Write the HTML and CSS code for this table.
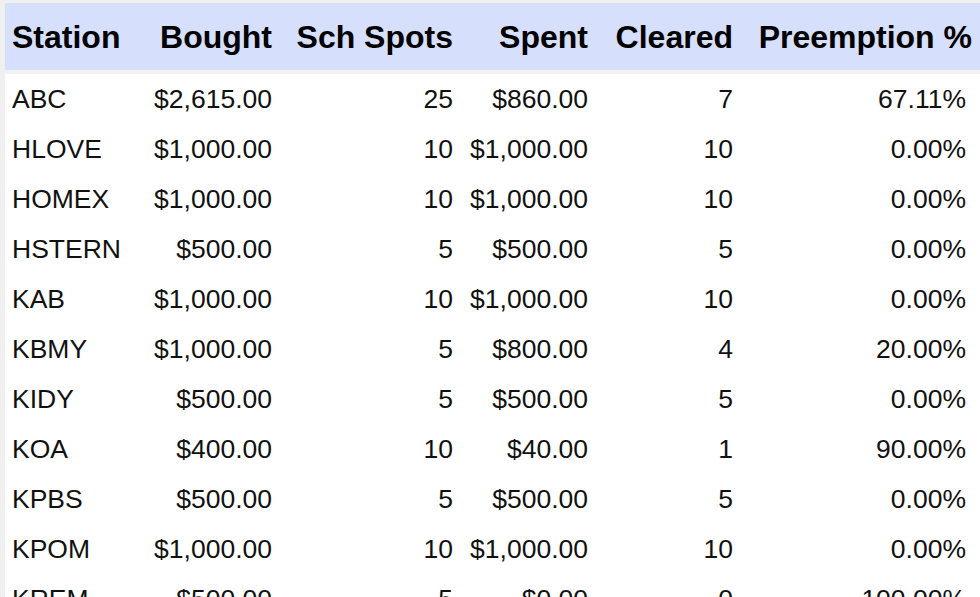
FILE: index.html
```html
<!DOCTYPE html>
<html>
<head>
<meta charset="utf-8">
<link rel="stylesheet" href="styles.css">
</head>
<body>
<table class="report">
  <colgroup>
    <col class="c1"><col class="c2"><col class="c3"><col class="c4"><col class="c5"><col class="c6">
  </colgroup>
  <thead>
    <tr>
      <th class="left">Station</th>
      <th>Bought</th>
      <th>Sch Spots</th>
      <th>Spent</th>
      <th>Cleared</th>
      <th class="last">Preemption %</th>
    </tr>
  </thead>
  <tbody>
    <tr><td class="left">ABC</td><td>$2,615.00</td><td>25</td><td>$860.00</td><td>7</td><td class="last">67.11%</td></tr>
    <tr><td class="left">HLOVE</td><td>$1,000.00</td><td>10</td><td>$1,000.00</td><td>10</td><td class="last">0.00%</td></tr>
    <tr><td class="left">HOMEX</td><td>$1,000.00</td><td>10</td><td>$1,000.00</td><td>10</td><td class="last">0.00%</td></tr>
    <tr><td class="left">HSTERN</td><td>$500.00</td><td>5</td><td>$500.00</td><td>5</td><td class="last">0.00%</td></tr>
    <tr><td class="left">KAB</td><td>$1,000.00</td><td>10</td><td>$1,000.00</td><td>10</td><td class="last">0.00%</td></tr>
    <tr><td class="left">KBMY</td><td>$1,000.00</td><td>5</td><td>$800.00</td><td>4</td><td class="last">20.00%</td></tr>
    <tr><td class="left">KIDY</td><td>$500.00</td><td>5</td><td>$500.00</td><td>5</td><td class="last">0.00%</td></tr>
    <tr><td class="left">KOA</td><td>$400.00</td><td>10</td><td>$40.00</td><td>1</td><td class="last">90.00%</td></tr>
    <tr><td class="left">KPBS</td><td>$500.00</td><td>5</td><td>$500.00</td><td>5</td><td class="last">0.00%</td></tr>
    <tr><td class="left">KPOM</td><td>$1,000.00</td><td>10</td><td>$1,000.00</td><td>10</td><td class="last">0.00%</td></tr>
    <tr><td class="left">KREM</td><td>$500.00</td><td>5</td><td>$0.00</td><td>0</td><td class="last">100.00%</td></tr>
  </tbody>
</table>
</body>
</html>
```
FILE: styles.css
```css
html, body {
  margin: 0;
  padding: 0;
  background: #f0f0f0;
  overflow: hidden;
  height: 597px;
}
body {
  padding: 3px 0 0 5px;
}
.report {
  table-layout: fixed;
  width: 975px;
  border-collapse: collapse;
  background: #ffffff;
}
.c1 { width: 140px; }
.c2 { width: 133px; }
.c3 { width: 181px; }
.c4 { width: 135px; }
.c5 { width: 145px; }
.c6 { width: 241px; }
.report thead tr {
  background: #d6dffb;
}
.report th {
  font-family: "Liberation Sans", Arial, sans-serif;
  font-weight: bold;
  font-size: 32px;
  color: #000;
  height: 65px;
  padding: 2px 6px 0;
  text-align: right;
  white-space: nowrap;
  border-bottom: 4px solid #f3f3f3;
}
.report td {
  font-family: "Liberation Sans", Arial, sans-serif;
  font-size: 26.5px;
  color: #111;
  height: 50px;
  padding: 0 6px;
  text-align: right;
  white-space: nowrap;
}
.report th.left, .report td.left {
  text-align: left;
  padding-left: 7px;
}
.report th.last { padding-right: 8px; }
.report td.last { padding-right: 14px; }
```
